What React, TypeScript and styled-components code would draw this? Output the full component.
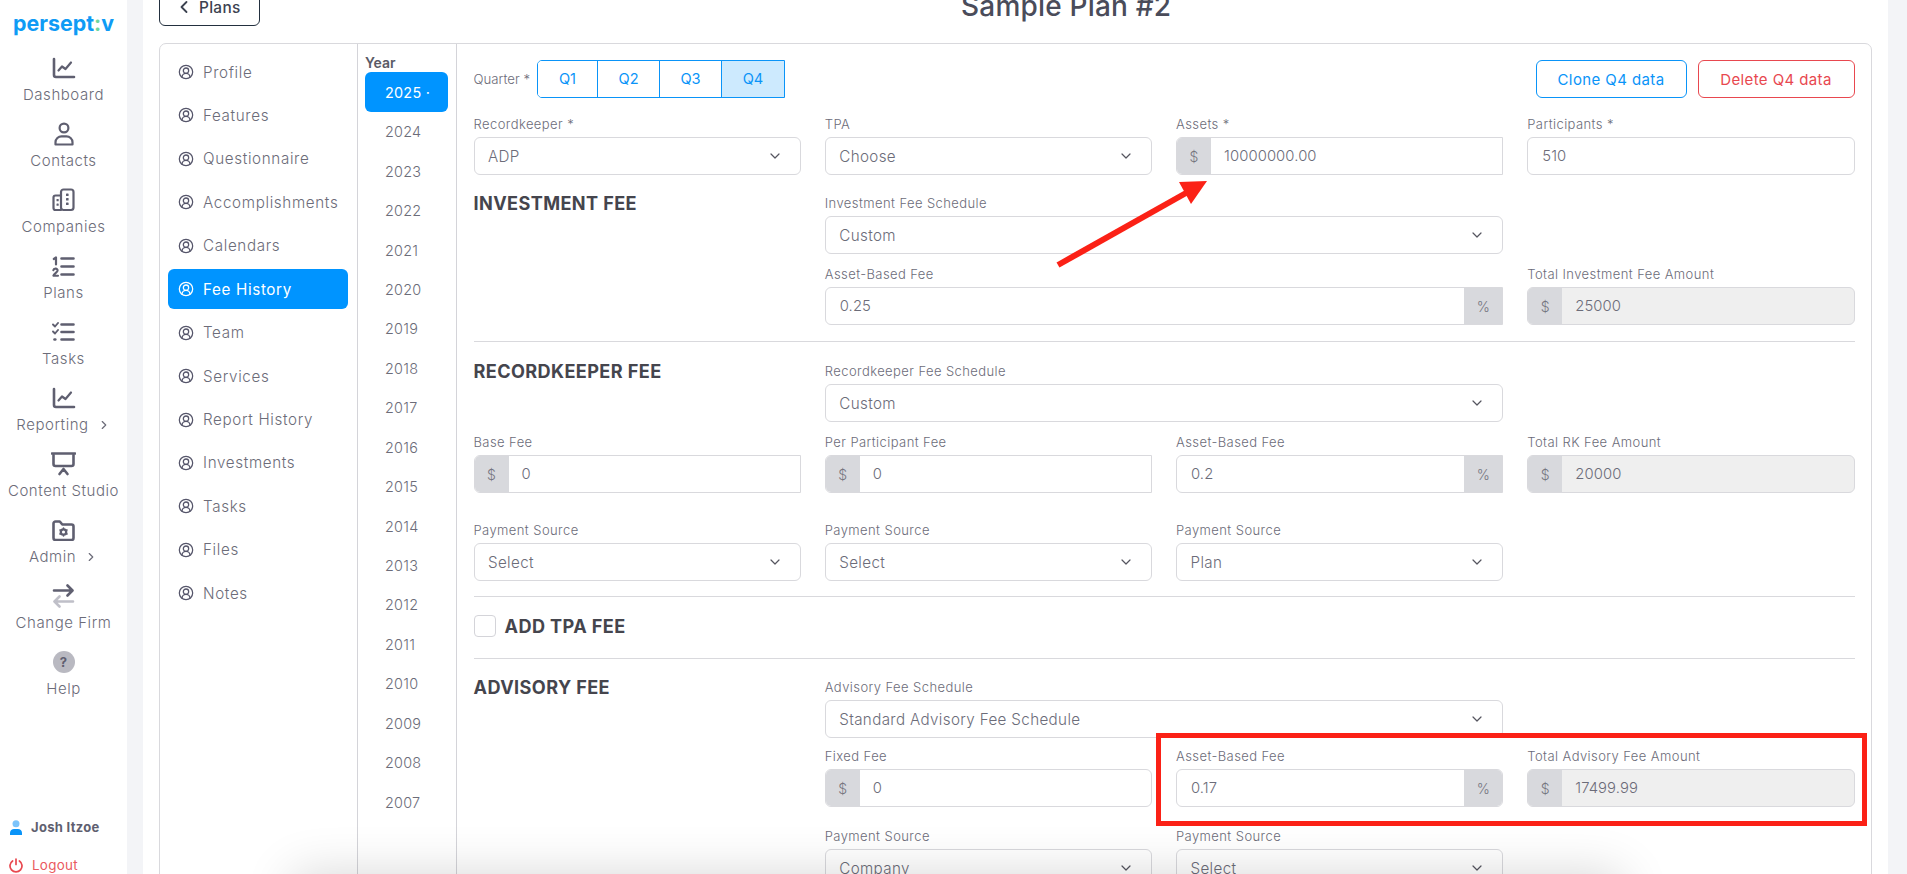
import React from "react";
import styled, { createGlobalStyle } from "styled-components";
import { ChevronDown, ChevronLeft, ChevronRight, CircleUserRound } from "lucide-react";

const FONT = `Inter, "Open Sans", "Liberation Sans", sans-serif`;
const INK = "#5f5f70";
const MUTED = "#6c6c79";

const Global = createGlobalStyle`
  html, body { margin: 0; padding: 0; height: 874px; overflow: hidden; background: #f3f4f7; }
  body { font-family: ${FONT}; }
  * { box-sizing: border-box; }
`;

const Shell = styled.div`
  position: relative;
  display: flex;
  width: 1907px;
  height: 874px;
  overflow: hidden;
  background: #f3f4f7;
`;

const Sidebar = styled.aside`
  flex: 0 0 127px;
  display: flex;
  flex-direction: column;
  background: #fff;
  padding-top: 11px;
`;

const Logo = styled.div`
  text-align: center;
  font-size: 21.4px;
  line-height: 25px;
  font-weight: 700;
  color: #0f9bf5;
  margin-bottom: 20px;
  span { color: #6fd69c; }
`;

const SideItem = styled.div`
  height: 66px;
  display: flex;
  flex-direction: column;
  align-items: center;
  color: ${INK};
`;

const SideIcon = styled.div`
  height: 24px;
  display: flex;
  align-items: center;
  justify-content: center;
  margin-bottom: 6px;
`;

const SideLabel = styled.div`
  display: flex;
  align-items: center;
  gap: 8px;
  font-size: 15px;
  line-height: 18px;
  letter-spacing: 0.55px;
  color: ${MUTED};
  white-space: nowrap;
  font-weight: 300;
`;

const HelpDot = styled.div`
  width: 22px;
  height: 22px;
  border-radius: 50%;
  background: #b9b9c1;
  color: #5f5f70;
  display: flex;
  align-items: center;
  justify-content: center;
  font-size: 13px;
  font-weight: 700;
`;

const SideFoot = styled.div`
  margin-top: auto;
  display: flex;
  flex-direction: column;
  gap: 20px;
  padding: 0 0 0 9px;
`;

const FootRow = styled.div<{ $red?: boolean }>`
  display: flex;
  align-items: center;
  gap: ${(p) => (p.$red ? "9px" : "8px")};
  font-size: ${(p) => (p.$red ? "13.4px" : "13px")};
  line-height: 18px;
  font-weight: ${(p) => (p.$red ? 400 : 700)};
  letter-spacing: 0.3px;
  color: ${(p) => (p.$red ? "#ea5a60" : "#5f5f70")};
`;

const Main = styled.main`
  flex: 0 0 1745px;
  margin-left: 16px;
  background: #fff;
  padding: 0 16px;
`;

const Header = styled.header`
  display: flex;
  align-items: center;
  height: 38px;
  margin: -12px 0 17px;
`;

const BackButton = styled.button`
  width: 101px;
  height: 38px;
  border: 1px solid #23303f;
  border-radius: 6px;
  background: #fff;
  display: flex;
  align-items: center;
  gap: 5px;
  padding: 0 0 0 14px;
  color: #3c4250;
  font: 500 15.4px ${FONT};
  letter-spacing: 0.3px;
`;

const Title = styled.h1`
  margin: 0 0 0 701px;
  font-size: 28px;
  line-height: 40px;
  font-weight: 500;
  letter-spacing: 0.2px;
  color: #4a4c5a;
  position: relative;
  top: -1px;
  white-space: nowrap;
`;

const Card = styled.section`
  display: flex;
  width: 1713px;
  height: 900px;
  border: 1px solid #d9d9dd;
  border-radius: 7px;
`;

const Nav = styled.nav`
  flex: 0 0 198px;
  border-right: 1px solid #d4d4d9;
  padding: 8px 9px 0 8px;
  display: flex;
  flex-direction: column;
  gap: 3.45px;
`;

const NavItem = styled.div<{ $active?: boolean }>`
  height: 40px;
  display: flex;
  align-items: center;
  gap: 9px;
  padding-left: 10px;
  border-radius: 6px;
  background: ${(p) => (p.$active ? "#0094ff" : "transparent")};
  color: ${(p) => (p.$active ? "#fff" : MUTED)};
  font-size: 15.2px;
  font-weight: ${(p) => (p.$active ? 400 : 300)};
  letter-spacing: 0.65px;
  white-space: nowrap;
  svg { color: ${(p) => (p.$active ? "#fff" : "#55556a")}; flex: none; }
`;

const Years = styled.div`
  flex: 0 0 99px;
  border-right: 1px solid #d4d4d9;
  padding: 9px 8px 0 7px;
`;

const YearHead = styled.div`
  font-size: 14px;
  line-height: 19px;
  font-weight: 600;
  color: #5a5a66;
`;

const YearItem = styled.div<{ $active?: boolean }>`
  height: ${(p) => (p.$active ? "40px" : "39.45px")};
  display: flex;
  align-items: center;
  padding-left: 20px;
  border-radius: 6px;
  background: ${(p) => (p.$active ? "#0094ff" : "transparent")};
  color: ${(p) => (p.$active ? "#fff" : MUTED)};
  font-size: 14.4px;
  font-weight: ${(p) => (p.$active ? 400 : 300)};
  letter-spacing: 0.25px;
`;

const Form = styled.div`
  flex: 1;
  min-width: 0;
  padding: 16px 16.5px 0 16.5px;
`;

const Toolbar = styled.div`
  display: flex;
  align-items: center;
  height: 38px;
  margin-bottom: 18px;
`;

const QuarterLabel = styled.span`
  font-size: 13.2px;
  font-weight: 300;
  color: ${MUTED};
  width: 63.5px;
  flex: none;
  white-space: nowrap;
`;

const QuarterGroup = styled.div`
  display: flex;
  height: 38px;
  border: 1px solid #0a94f8;
  border-radius: 5px 0 0 5px;
  overflow: hidden;
`;

const QuarterBtn = styled.div<{ $active?: boolean; $w: number }>`
  width: ${(p) => p.$w}px;
  display: flex;
  align-items: center;
  justify-content: center;
  font-size: 14.6px;
  color: #0a94f8;
  background: ${(p) => (p.$active ? "#cdeafe" : "#fff")};
  & + & { border-left: 1px solid #0a94f8; }
`;

const Actions = styled.div`
  margin-left: auto;
  display: flex;
  gap: 11px;
`;

const OutlineBtn = styled.div<{ $red?: boolean; $w: number }>`
  width: ${(p) => p.$w}px;
  height: 38px;
  border: 1px solid ${(p) => (p.$red ? "#e8484f" : "#0a94f8")};
  border-radius: 6px;
  display: flex;
  align-items: center;
  justify-content: center;
  font-size: 15px;
  letter-spacing: 0.4px;
  color: ${(p) => (p.$red ? "#e8484f" : "#0a94f8")};
`;

const Grid = styled.div<{ $rowGap?: number; $top?: number }>`
  display: grid;
  grid-template-columns: repeat(4, minmax(0, 1fr));
  column-gap: 24px;
  row-gap: ${(p) => p.$rowGap ?? 12}px;
  margin-top: ${(p) => p.$top ?? 0}px;
`;

const Field = styled.div<{ $span?: number; $col?: number }>`
  display: flex;
  flex-direction: column;
  min-width: 0;
  grid-column: ${(p) => (p.$col ? `${p.$col} / span ${p.$span ?? 1}` : `span ${p.$span ?? 1}`)};
`;

const Label = styled.label`
  font-size: 13px;
  font-weight: 300;
  line-height: 16px;
  letter-spacing: 0.42px;
  margin-bottom: 5px;
  color: ${MUTED};
  white-space: nowrap;
`;

const Heading = styled.h2`
  grid-column: 1;
  margin: 0;
  font-size: 18.1px;
  line-height: 16px;
  font-weight: 700;
  letter-spacing: 0.4px;
  color: #45454d;
  white-space: nowrap;
`;

const Control = styled.div<{ $disabled?: boolean; $squareRight?: boolean }>`
  height: 38px;
  display: flex;
  align-items: stretch;
  overflow: hidden;
  border: 1px solid #d9d9dd;
  border-radius: ${(p) => (p.$squareRight ? "6px 0 0 6px" : "6px")};
  background: ${(p) => (p.$disabled ? "#efefef" : "#fff")};
  color: ${MUTED};
  font-size: 14.8px;
  font-weight: 300;
`;

const SelectText = styled.span`
  flex: 1;
  align-self: center;
  padding-left: 13.5px;
  font-size: 15.2px;
  letter-spacing: 0.35px;
  white-space: nowrap;
`;

const Chevron = styled.span`
  flex: 0 0 33px;
  display: flex;
  align-items: center;
  color: #55555f;
`;

const Addon = styled.span<{ $w: number }>`
  flex: 0 0 ${(p) => p.$w}px;
  background: #d8d9dd;
  display: flex;
  align-items: center;
  justify-content: center;
  color: #75757f;
  font-size: 14px;
`;

const Value = styled.span<{ $pad: number }>`
  flex: 1;
  align-self: center;
  padding-left: ${(p) => p.$pad}px;
  letter-spacing: 0.1px;
`;

const Rule = styled.hr<{ $top: number }>`
  border: 0;
  height: 1px;
  background: #d9d9dd;
  margin: ${(p) => p.$top}px 0 0;
`;

const CheckRow = styled.div`
  display: flex;
  align-items: center;
  gap: 9px;
  margin: 18px 0 21px;
  height: 22px;
`;

const Checkbox = styled.span`
  width: 22px;
  height: 22px;
  border: 1px solid #d4d4d9;
  border-radius: 4px;
  background: #fff;
`;

const CheckText = styled.span`
  font-size: 18.1px;
  font-weight: 700;
  letter-spacing: 0.4px;
  color: #45454d;
`;

const RedBox = styled.div`
  position: absolute;
  left: 1156px;
  top: 733px;
  width: 711px;
  height: 93px;
  border: 5px solid #fb2116;
  pointer-events: none;
`;

const ArrowSvg = styled.svg`
  position: absolute;
  left: 1050px;
  top: 175px;
  pointer-events: none;
`;

const BottomGlow = styled.div`
  position: absolute;
  left: 315px;
  top: 896px;
  width: 1285px;
  height: 30px;
  box-shadow: 0 0 50px 22px rgba(0, 0, 0, 0.16);
  pointer-events: none;
`;

const stroke = { fill: "none", stroke: "currentColor", strokeWidth: 2.6, strokeLinecap: "round", strokeLinejoin: "round" } as const;

const IconDashboard = () => (
  <svg width="24" height="22" viewBox="0 0 24 22" {...stroke}>
    <path d="M2 2v16a2 2 0 0 0 2 2h18" />
    <path d="M6.500 13.500 10 9.500l3.500 2.500L19 5.500" strokeWidth="2.200" />
  </svg>
);
const IconContact = () => (
  <svg width="22" height="24" viewBox="0 0 22 24" {...stroke} strokeWidth="2.200">
    <circle cx="11" cy="6" r="4.400" />
    <path d="M2.500 22.500v-2.200c0-3.600 3-6 6-6h5c3 0 6 2.400 6 6v2.200z" />
  </svg>
);
const IconCompanies = () => (
  <svg width="23" height="24" viewBox="0 0 23 24" {...stroke} strokeWidth="2.200">
    <path d="M9 7.500H3.500a2 2 0 0 0-2 2V20a2 2 0 0 0 2 2H9" />
    <rect x="9" y="1.500" width="12.500" height="20.500" rx="2.500" />
    <g stroke="none" fill="currentColor">
      <rect x="14" y="5.500" width="2.600" height="2.600" rx=".6" />
      <rect x="14" y="10" width="2.600" height="2.600" rx=".6" />
      <rect x="14" y="14.500" width="2.600" height="2.600" rx=".6" />
      <rect x="4.500" y="11" width="2.200" height="2.200" rx=".5" />
      <rect x="4.500" y="15.500" width="2.200" height="2.200" rx=".5" />
    </g>
  </svg>
);
const IconPlans = () => (
  <svg width="23" height="21" viewBox="0 0 23 21" {...stroke}>
    <path d="M1.800 3 4 1.500V8.500" strokeWidth="2.200" />
    <path d="M1.300 14.300c.4-2.300 4.600-2.200 4.300.4-.2 1.500-3.400 2.800-4.200 5h4.600" strokeWidth="2.100" />
    <path d="M9.500 2.500H21.500M9.500 10.500H21.500M9.500 18.500H21.500" />
  </svg>
);
const IconTasks = () => (
  <svg width="23" height="20" viewBox="0 0 23 20" {...stroke}>
    <path d="M1 2.500 3 4.500 6 1M1 9.500l2 2 3-3.500" strokeWidth="1.900" />
    <path d="M2.500 17.500h.8" />
    <path d="M9.500 2.500H21.500M9.500 10H21.500M9.500 17.500H21.500" />
  </svg>
);
const IconStudio = () => (
  <svg width="25" height="24" viewBox="0 0 25 24" {...stroke}>
    <path d="M1 1.500H24" />
    <path d="M2.500 3v9a2 2 0 0 0 2 2h16a2 2 0 0 0 2-2V3" />
    <path d="M8.500 22l4-5 4 5" />
  </svg>
);
const IconAdmin = () => (
  <svg width="23" height="21" viewBox="0 0 23 21" {...stroke}>
    <path d="M1.500 3.500a2 2 0 0 1 2-2h4.300l2.500 3h9.200a2 2 0 0 1 2 2v11.500a2 2 0 0 1-2 2h-16a2 2 0 0 1-2-2z" />
    <circle cx="11.500" cy="12" r="2.700" strokeWidth="2.300" />
    <path d="M11.500 8v1M11.500 15v1M8 10l.8.500M14.200 13.500l.8.500M8 14l.8-.500M14.200 10.500l.8-.500" strokeWidth="1.600" />
  </svg>
);
const IconSwap = () => (
  <svg width="23" height="24" viewBox="0 0 23 24" fill="none" strokeWidth="2.600" strokeLinecap="round" strokeLinejoin="round">
    <path d="M2 6.500H20M15.500 1.500l5 5-5 5" stroke="#5f5f70" />
    <path d="M21 17.500H3M7.500 12.500l-5 5 5 5" stroke="#bfbfc8" />
  </svg>
);
const IconAvatar = () => (
  <svg width="14" height="15" viewBox="0 0 14 15">
    <circle cx="7" cy="3.800" r="3.500" fill="#7cc4fb" />
    <path d="M1 15v-2.200C1 10.500 3 9 5 9h4c2 0 4 1.500 4 3.800V15z" fill="#0a94f8" />
  </svg>
);
const IconPower = () => (
  <svg width="14" height="15" viewBox="0 0 14 15" fill="none" stroke="#e8484f" strokeWidth="1.700" strokeLinecap="round">
    <path d="M7 1v5.500" />
    <path d="M3.600 3A6 6 0 1 0 10.400 3" />
  </svg>
);

const sideItems: { label: string; icon: React.ReactNode; more?: boolean }[] = [
  { label: "Dashboard", icon: <IconDashboard /> },
  { label: "Contacts", icon: <IconContact /> },
  { label: "Companies", icon: <IconCompanies /> },
  { label: "Plans", icon: <IconPlans /> },
  { label: "Tasks", icon: <IconTasks /> },
  { label: "Reporting", icon: <IconDashboard />, more: true },
  { label: "Content Studio", icon: <IconStudio /> },
  { label: "Admin", icon: <IconAdmin />, more: true },
  { label: "Change Firm", icon: <IconSwap /> },
  { label: "Help", icon: <HelpDot>?</HelpDot> },
];

const navItems = ["Profile", "Features", "Questionnaire", "Accomplishments", "Calendars", "Fee History", "Team", "Services", "Report History", "Investments", "Tasks", "Files", "Notes"];
const years = Array.from({ length: 19 }, (_, i) => 2025 - i);

const SelectField = ({ label, value, span, col }: { label: string; value: string; span?: number; col?: number }) => (
  <Field $span={span} $col={col}>
    <Label>{label}</Label>
    <Control>
      <SelectText>{value}</SelectText>
      <Chevron><ChevronDown size={16} strokeWidth={1.8} /></Chevron>
    </Control>
  </Field>
);

const MoneyField = ({ label, value, squareRight, disabled, col }: { label: string; value: string; squareRight?: boolean; disabled?: boolean; col?: number }) => (
  <Field $col={col}>
    <Label>{label}</Label>
    <Control $disabled={disabled} $squareRight={squareRight}>
      <Addon $w={34}>$</Addon>
      <Value $pad={13}>{value}</Value>
    </Control>
  </Field>
);

const PercentField = ({ label, value, span, col, squareRight }: { label: string; value: string; span?: number; col?: number; squareRight?: boolean }) => (
  <Field $span={span} $col={col}>
    <Label>{label}</Label>
    <Control $squareRight={squareRight}>
      <Value $pad={14}>{value}</Value>
      <Addon $w={38}>%</Addon>
    </Control>
  </Field>
);

export default function App() {
  return (
    <Shell>
      <Global />
      <Sidebar>
        <Logo>persept<span>:</span>v</Logo>
        {sideItems.map((s) => (
          <SideItem key={s.label}>
            <SideIcon>{s.icon}</SideIcon>
            <SideLabel>
              {s.label}
              {s.more && <ChevronRight size={14} strokeWidth={2} />}
            </SideLabel>
          </SideItem>
        ))}
        <SideFoot>
          <FootRow><IconAvatar /> Josh Itzoe</FootRow>
          <FootRow $red><IconPower /> Logout</FootRow>
        </SideFoot>
      </Sidebar>

      <Main>
        <Header>
          <BackButton><ChevronLeft size={20} strokeWidth={2.2} /> Plans</BackButton>
          <Title>Sample Plan #2</Title>
        </Header>
        <Card>
          <Nav>
            {navItems.map((n) => (
              <NavItem key={n} $active={n === "Fee History"}>
                <CircleUserRound size={16} strokeWidth={1.9} />
                {n}
              </NavItem>
            ))}
          </Nav>
          <Years>
            <YearHead>Year</YearHead>
            {years.map((y) => (
              <YearItem key={y} $active={y === 2025}>{y === 2025 ? "2025 ·" : y}</YearItem>
            ))}
          </Years>
          <Form>
            <Toolbar>
              <QuarterLabel>Quarter *</QuarterLabel>
              <QuarterGroup>
                <QuarterBtn $w={59}>Q1</QuarterBtn>
                <QuarterBtn $w={62}>Q2</QuarterBtn>
                <QuarterBtn $w={62}>Q3</QuarterBtn>
                <QuarterBtn $w={63} $active>Q4</QuarterBtn>
              </QuarterGroup>
              <Actions>
                <OutlineBtn $w={151}>Clone Q4 data</OutlineBtn>
                <OutlineBtn $w={157} $red>Delete Q4 data</OutlineBtn>
              </Actions>
            </Toolbar>

            <Grid>
              <SelectField label="Recordkeeper *" value="ADP" />
              <SelectField label="TPA" value="Choose" />
              <MoneyField label="Assets *" value="10000000.00" squareRight />
              <Field>
                <Label>Participants *</Label>
                <Control><Value $pad={14}>510</Value></Control>
              </Field>
            </Grid>

            <Grid $top={20}>
              <Heading>INVESTMENT FEE</Heading>
              <SelectField label="Investment Fee Schedule" value="Custom" span={2} col={2} />
              <PercentField label="Asset-Based Fee" value="0.25" span={2} col={2} squareRight />
              <MoneyField label="Total Investment Fee Amount" value="25000" disabled />
            </Grid>
            <Rule $top={16} />

            <Grid $top={21}>
              <Heading>RECORDKEEPER FEE</Heading>
              <SelectField label="Recordkeeper Fee Schedule" value="Custom" span={2} col={2} />
              <MoneyField label="Base Fee" value="0" squareRight col={1} />
              <MoneyField label="Per Participant Fee" value="0" squareRight />
              <PercentField label="Asset-Based Fee" value="0.2" squareRight />
              <MoneyField label="Total RK Fee Amount" value="20000" disabled />
            </Grid>
            <Grid $top={29}>
              <SelectField label="Payment Source" value="Select" />
              <SelectField label="Payment Source" value="Select" />
              <SelectField label="Payment Source" value="Plan" />
            </Grid>
            <Rule $top={15} />

            <CheckRow>
              <Checkbox />
              <CheckText>ADD TPA FEE</CheckText>
            </CheckRow>
            <Rule $top={0} />

            <Grid $top={20} $rowGap={10}>
              <Heading>ADVISORY FEE</Heading>
              <SelectField label="Advisory Fee Schedule" value="Standard Advisory Fee Schedule" span={2} col={2} />
              <MoneyField label="Fixed Fee" value="0" col={2} />
              <PercentField label="Asset-Based Fee" value="0.17" />
              <MoneyField label="Total Advisory Fee Amount" value="17499.99" disabled />
            </Grid>
            <Grid $top={21}>
              <SelectField label="Payment Source" value="Company" col={2} />
              <SelectField label="Payment Source" value="Select" />
            </Grid>
          </Form>
        </Card>
      </Main>

      <RedBox />
      <ArrowSvg width="165" height="100" viewBox="0 0 165 100">
        <path d="M8 90 L136 18" stroke="#fb2116" strokeWidth="6" fill="none" />
        <polygon points="157,6 129,7 141,29" fill="#fb2116" />
      </ArrowSvg>
      <BottomGlow />
    </Shell>
  );
}
